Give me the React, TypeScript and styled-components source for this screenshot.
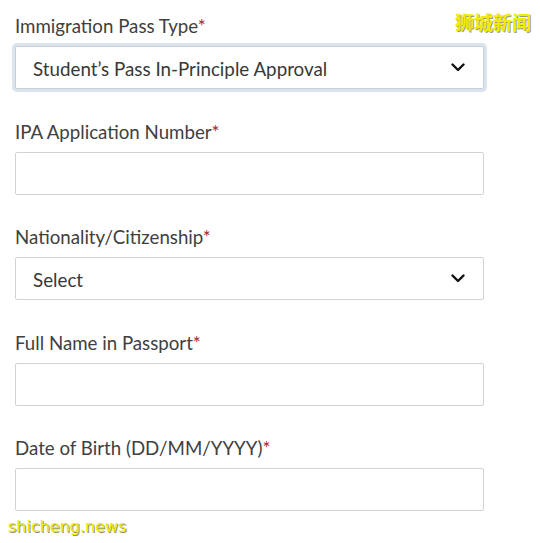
import React from "react";
import styled, { createGlobalStyle } from "styled-components";

const Global = createGlobalStyle`
  html, body { margin: 0; padding: 0; background: #ffffff; }
  body { font-family: Lato, "Open Sans", sans-serif; }
`;

const Page = styled.div`
  position: relative;
  width: 540px;
  height: 543px;
  background: #fff;
  padding: 15px 0 0 15px;
  box-sizing: border-box;
  overflow: hidden;
`;

const Form = styled.div`
  width: 469px;
  display: flex;
  flex-direction: column;
  gap: 31.5px;
`;

const Field = styled.div`
  display: flex;
  flex-direction: column;
  gap: 9px;
`;

const Label = styled.label`
  font-family: Lato, sans-serif;
  font-size: 18.7px;
  line-height: 22px;
  height: 22px;
  color: #404040;
  white-space: nowrap;
`;

const Star = styled.span`
  color: #a0282a;
`;

const Box = styled.div<{ $focused?: boolean }>`
  height: 43px;
  box-sizing: border-box;
  border: 1px solid ${(p) => (p.$focused ? "#c4cfd9" : "#d2d2d2")};
  border-radius: 2px;
  background: #fff;
  display: flex;
  align-items: center;
  justify-content: space-between;
  padding: 0 18px 0 17px;
  box-shadow: ${(p) => (p.$focused ? "0 0 0 3px #dbe4ec" : "none")};
`;

const Value = styled.span`
  font-family: Lato, sans-serif;
  font-size: 18.8px;
  color: #383838;
  padding-top: 1px;
`;

const Chevron = () => (
  <svg width="14" height="9" viewBox="0 0 14 9">
    <path d="M1.5 1.5 L7 7 L12.5 1.5" fill="none" stroke="#111" strokeWidth="2.4" strokeLinecap="round" strokeLinejoin="round" />
  </svg>
);

const WatermarkCn = styled.div`
  position: absolute;
  top: 10px;
  right: 9px;
  font-family: "Noto Sans CJK SC", sans-serif;
  font-size: 19px;
  font-weight: 700;
  line-height: 24px;
  color: #f2ec00;
  text-shadow: 1px 1px 0 #9a9a7a;
`;

const WatermarkEn = styled.div`
  position: absolute;
  left: 8px;
  top: 516px;
  font-family: "DejaVu Sans", sans-serif;
  font-size: 16px;
  line-height: 22px;
  color: #eee800;
  text-shadow: 1px 1px 0 #8f8f70;
`;

type FieldDef = { label: string; value?: string; select?: boolean; focused?: boolean };

const fields: FieldDef[] = [
  { label: "Immigration Pass Type", value: "Student’s Pass In-Principle Approval", select: true, focused: true },
  { label: "IPA Application Number" },
  { label: "Nationality/Citizenship", value: "Select", select: true },
  { label: "Full Name in Passport" },
  { label: "Date of Birth (DD/MM/YYYY)" },
];

export default function App() {
  return (
    <>
      <Global />
      <Page>
        <Form>
          {fields.map((f) => (
            <Field key={f.label}>
              <Label>
                {f.label}
                <Star>*</Star>
              </Label>
              <Box $focused={f.focused}>
                <Value>{f.value ?? ""}</Value>
                {f.select && <Chevron />}
              </Box>
            </Field>
          ))}
        </Form>
        <WatermarkCn>狮城新闻</WatermarkCn>
        <WatermarkEn>shicheng.news</WatermarkEn>
      </Page>
    </>
  );
}
